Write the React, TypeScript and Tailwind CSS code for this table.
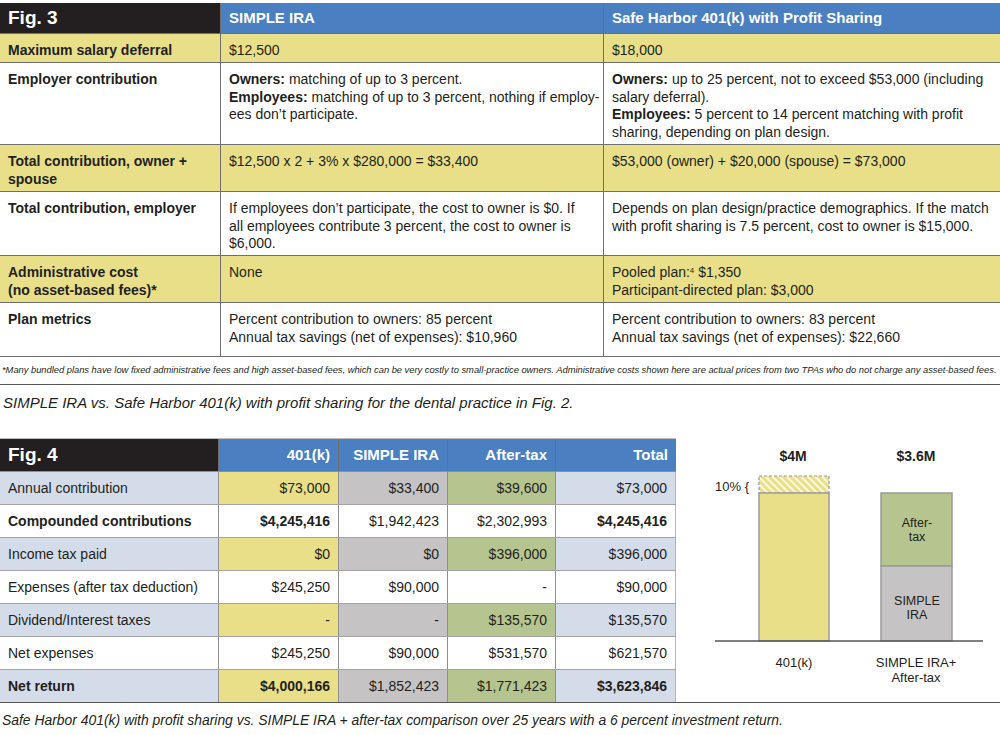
import React from "react";

const INK = "text-[#231f20]";
const YEL = "bg-[#e8df88]";
const GRY = "bg-[#c5c3c3]";
const GRN = "bg-[#b6c58f]";
const LBL = "bg-[#d4dcea]";

type Row3 = {
  h: string;
  bg: string;
  label: string[];
  a: React.ReactNode[];
  b: React.ReactNode[];
};

const fig3Rows: Row3[] = [
  { h: "h-[29px]", bg: YEL, label: ["Maximum salary deferral"], a: ["$12,500"], b: ["$18,000"] },
  {
    h: "h-[82px]",
    bg: "bg-white",
    label: ["Employer contribution"],
    a: [
      <><b>Owners:</b> matching of up to 3 percent.</>,
      <><b>Employees:</b> matching of up to 3 percent, nothing if employ-</>,
      "ees don’t participate.",
    ],
    b: [
      <><b>Owners:</b> up to 25 percent, not to exceed $53,000 (including</>,
      "salary deferral).",
      <><b>Employees:</b> 5 percent to 14 percent matching with profit</>,
      "sharing, depending on plan design.",
    ],
  },
  {
    h: "h-[47px]",
    bg: YEL,
    label: ["Total contribution, owner +", "spouse"],
    a: ["$12,500 x 2 + 3% x $280,000 = $33,400"],
    b: ["$53,000 (owner) + $20,000 (spouse) = $73,000"],
  },
  {
    h: "h-[64px]",
    bg: "bg-white",
    label: ["Total contribution, employer"],
    a: [
      "If employees don’t participate, the cost to owner is $0. If",
      "all employees contribute 3 percent, the cost to owner is",
      "$6,000.",
    ],
    b: [
      "Depends on plan design/practice demographics. If the match",
      "with profit sharing is 7.5 percent, cost to owner is $15,000.",
    ],
  },
  {
    h: "h-[47px]",
    bg: YEL,
    label: ["Administrative cost", "(no asset-based fees)*"],
    a: ["None"],
    b: [
      <>Pooled plan:<sup className="text-[8px]">4</sup> $1,350</>,
      "Participant-directed plan: $3,000",
    ],
  },
  {
    h: "h-[54px]",
    bg: "bg-white",
    label: ["Plan metrics"],
    a: ["Percent contribution to owners: 85 percent", "Annual tax savings (net of expenses): $10,960"],
    b: ["Percent contribution to owners: 83 percent", "Annual tax savings (net of expenses): $22,660"],
  },
];

type Cell = { v: string; bg: string; bold?: boolean };
type Row4 = { label: string; bg: string; bold?: boolean; cells: Cell[] };

const fig4Rows: Row4[] = [
  {
    label: "Annual contribution",
    bg: LBL,
    cells: [
      { v: "$73,000", bg: YEL },
      { v: "$33,400", bg: GRY },
      { v: "$39,600", bg: GRN },
      { v: "$73,000", bg: LBL },
    ],
  },
  {
    label: "Compounded contributions",
    bg: "bg-white",
    bold: true,
    cells: [
      { v: "$4,245,416", bg: "bg-white", bold: true },
      { v: "$1,942,423", bg: "bg-white" },
      { v: "$2,302,993", bg: "bg-white" },
      { v: "$4,245,416", bg: "bg-white", bold: true },
    ],
  },
  {
    label: "Income tax paid",
    bg: LBL,
    cells: [
      { v: "$0", bg: YEL },
      { v: "$0", bg: GRY },
      { v: "$396,000", bg: GRN },
      { v: "$396,000", bg: LBL },
    ],
  },
  {
    label: "Expenses (after tax deduction)",
    bg: "bg-white",
    cells: [
      { v: "$245,250", bg: "bg-white" },
      { v: "$90,000", bg: "bg-white" },
      { v: "-", bg: "bg-white" },
      { v: "$90,000", bg: "bg-white" },
    ],
  },
  {
    label: "Dividend/Interest taxes",
    bg: LBL,
    cells: [
      { v: "-", bg: YEL },
      { v: "-", bg: GRY },
      { v: "$135,570", bg: GRN },
      { v: "$135,570", bg: LBL },
    ],
  },
  {
    label: "Net expenses",
    bg: "bg-white",
    cells: [
      { v: "$245,250", bg: "bg-white" },
      { v: "$90,000", bg: "bg-white" },
      { v: "$531,570", bg: "bg-white" },
      { v: "$621,570", bg: "bg-white" },
    ],
  },
  {
    label: "Net return",
    bg: LBL,
    bold: true,
    cells: [
      { v: "$4,000,166", bg: YEL, bold: true },
      { v: "$1,852,423", bg: GRY },
      { v: "$1,771,423", bg: GRN },
      { v: "$3,623,846", bg: LBL, bold: true },
    ],
  },
];

const colW = ["w-[120px]", "w-[109px]", "w-[108px]", "w-[121px]"];
const heads = ["401(k)", "SIMPLE IRA", "After-tax", "Total"];

function Lines({ items, bold }: { items: React.ReactNode[]; bold?: boolean }) {
  return (
    <div className={`flex flex-col leading-[17.5px] ${bold ? "font-bold" : ""}`}>
      {items.map((t, i) => (
        <span key={i} className="whitespace-nowrap">
          {t}
        </span>
      ))}
    </div>
  );
}

function Chart() {
  return (
    <svg width="324" height="264" viewBox="0 0 324 264" className="shrink-0">
      <defs>
        <pattern id="hatch" width="5" height="5" patternUnits="userSpaceOnUse" patternTransform="rotate(-45)">
          <rect width="5" height="5" fill="#e8df88" />
          <rect width="2" height="5" fill="#fbf8e2" />
        </pattern>
      </defs>
      <g fontFamily="'Liberation Sans', Arial, sans-serif" fill="#231f20">
        <text x="117" y="23" fontSize="14" fontWeight="bold" textAnchor="middle">$4M</text>
        <text x="240" y="23" fontSize="14" fontWeight="bold" textAnchor="middle">$3.6M</text>

        <rect x="83" y="38" width="70" height="17" fill="url(#hatch)" stroke="#9a9a9a" strokeWidth="1.2" strokeDasharray="3 2" />
        <rect x="83" y="55" width="70" height="148" fill="#e8df88" stroke="#9a9a9a" strokeWidth="1.5" />
        <text x="39" y="53" fontSize="13">10% {"{"}</text>

        <rect x="205" y="55" width="71" height="73" fill="#b6c58f" stroke="#9a9a9a" strokeWidth="1.5" />
        <rect x="205" y="128" width="71" height="75" fill="#c5c3c3" stroke="#9a9a9a" strokeWidth="1.5" />
        <text x="241" y="89" fontSize="12.5" textAnchor="middle">After-</text>
        <text x="241" y="103" fontSize="12.5" textAnchor="middle">tax</text>
        <text x="241" y="167" fontSize="12.5" textAnchor="middle">SIMPLE</text>
        <text x="241" y="181" fontSize="12.5" textAnchor="middle">IRA</text>

        <line x1="39" y1="203" x2="307" y2="203" stroke="#555" strokeWidth="1.5" />

        <text x="118" y="229" fontSize="13" textAnchor="middle">401(k)</text>
        <text x="240" y="229" fontSize="13" textAnchor="middle">SIMPLE IRA+</text>
        <text x="240" y="244" fontSize="13" textAnchor="middle">After-tax</text>
      </g>
    </svg>
  );
}

export default function App() {
  return (
    <div className={`w-[1000px] h-[735px] bg-white overflow-hidden pt-[3px] font-['Liberation_Sans',Arial,sans-serif] ${INK} text-[14px]`}>
      {/* Fig. 3 */}
      <div className="flex flex-col">
        <div className="flex h-[31px] border-b-[1.5px] border-[#6f6f6f]">
          <div className="w-[220px] bg-[#231f20] text-white font-bold text-[19px] pl-2 flex items-center">Fig. 3</div>
          <div className="w-[383px] bg-[#4a80c2] text-white font-bold text-[15px] pl-2 flex items-center border-l-[1.5px] border-[#6f6f6f]">
            SIMPLE IRA
          </div>
          <div className="flex-1 bg-[#4a80c2] text-white font-bold text-[15px] pl-2 flex items-center border-l-[1.5px] border-[#6f6f6f]">
            Safe Harbor 401(k) with Profit Sharing
          </div>
        </div>
        {fig3Rows.map((r, i) => (
          <div key={i} className={`flex ${r.h} ${r.bg} border-b-[1.5px] border-[#6f6f6f]`}>
            <div className="w-[220px] pl-2 pt-[8px]">
              <Lines items={r.label} bold />
            </div>
            <div className="w-[383px] pl-2 pt-[8px] border-l-[1.5px] border-[#6f6f6f]">
              <Lines items={r.a} />
            </div>
            <div className="flex-1 pl-2 pt-[8px] border-l-[1.5px] border-[#6f6f6f]">
              <Lines items={r.b} />
            </div>
          </div>
        ))}
        <div className="h-[28px] flex items-center pl-[2px] border-b-[1.5px] border-[#555] italic text-[9.4px] whitespace-nowrap tracking-[-0.03px]">
          *Many bundled plans have low fixed administrative fees and high asset-based fees, which can be very costly to small-practice owners. Administrative costs shown here are actual prices from two TPAs who do not charge any asset-based fees.
        </div>
        <div className="h-[36px] flex items-center pl-[3px] italic text-[15px] whitespace-nowrap">
          SIMPLE IRA vs. Safe Harbor 401(k) with profit sharing for the dental practice in Fig. 2.
        </div>
      </div>

      {/* Fig. 4 */}
      <div className="mt-[17px] flex border-b-[1.5px] border-[#555]">
        <div className="w-[676px] flex flex-col border-t border-[#bdbdbd]">
          <div className="flex h-[33px] border-b border-[#8f8f8f]">
            <div className="w-[218px] bg-[#231f20] text-white font-bold text-[19px] pl-2 flex items-center">Fig. 4</div>
            {heads.map((h, i) => (
              <div
                key={h}
                className={`${colW[i]} bg-[#4a80c2] text-white font-bold text-[15px] pr-2 flex items-center justify-end border-l border-[#6f6f6f]`}
              >
                {h}
              </div>
            ))}
          </div>
          {fig4Rows.map((r, i) => (
            <div key={i} className={`flex ${i === fig4Rows.length - 1 ? "h-[32px]" : "h-[33px] border-b border-[#a3a3a3]"}`}>
              <div className={`w-[218px] ${r.bg} pl-2 flex items-center ${r.bold ? "font-bold" : ""}`}>{r.label}</div>
              {r.cells.map((c, j) => (
                <div
                  key={j}
                  className={`${colW[j]} ${c.bg} pr-2 flex items-center justify-end border-l border-[#8f8f8f] ${c.bold ? "font-bold" : ""} ${j === 3 ? "border-r border-r-[#b5b5b5]" : ""}`}
                >
                  {c.v}
                </div>
              ))}
            </div>
          ))}
        </div>
        <Chart />
      </div>
      <div className="h-[34px] flex items-center pl-[2px] italic text-[13.9px] whitespace-nowrap">
        Safe Harbor 401(k) with profit sharing vs. SIMPLE IRA + after-tax comparison over 25 years with a 6 percent investment return.
      </div>
    </div>
  );
}
